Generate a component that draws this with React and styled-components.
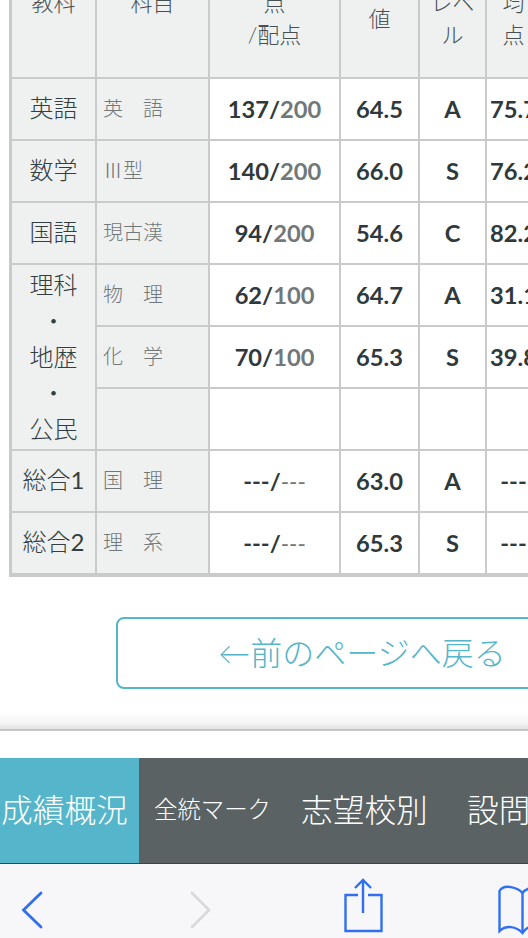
import React from 'react'
import styled, { createGlobalStyle } from 'styled-components'

const jp = `Lato, "Noto Sans CJK JP", sans-serif`
const line = '#c9cbcb'
const teal = '#55b5ca'
const ink = '#2f393c'
const blue = '#2f6ff0'

const GlobalStyle = createGlobalStyle`
  html, body { margin: 0; padding: 0; background: #fff; }
  body { font-family: ${jp}; }
`

const Screen = styled.div`
  width: 528px;
  height: 938px;
  overflow: hidden;
  display: flex;
  flex-direction: column;
`

const Page = styled.main`
  height: 713px;
  flex: none;
  overflow: hidden;
  display: flex;
  flex-direction: column;
`

const Table = styled.table`
  flex: none;
  width: 533px;
  margin: -71px 0 0 9px;
  table-layout: fixed;
  border-collapse: separate;
  border-spacing: 0;
  border-left: 3px solid ${line};
  border-bottom: 2px solid ${line};
  color: ${ink};
`

const Cell = styled.td`
  box-sizing: border-box;
  height: 62px;
  padding: 0;
  border-right: 2px solid ${line};
  border-bottom: 2px solid ${line};
  text-align: center;
  vertical-align: middle;
`

const Head = styled(Cell).attrs({ as: 'th' })`
  height: 150px;
  background: #eff1f1;
  font-size: 22px;
  font-weight: 300;
  line-height: 32px;
  color: #465053;
  word-break: break-all;
`

const Subject = styled(Cell)`
  background: #eff1f1;
  padding-bottom: ${p => (p.rowSpan ? 0 : 3)}px;
  font-size: 24px;
  font-weight: 300;
  line-height: 36px;
  color: #343e41;
`

const Digit = styled.span`
  font-weight: 400;
`

const Course = styled(Cell)`
  background: #eff1f1;
  padding: 0 0 4px 6px;
  text-align: left;
  font-size: 20px;
  font-weight: 300;
  color: #70787a;
`

const Value = styled(Cell)`
  padding-bottom: 1px;
  font-size: 23.7px;
  font-weight: 700;
  white-space: nowrap;
`

const Max = styled.span`
  color: #70787a;
  font-weight: ${p => (p.$light ? 400 : 700)};
  font-size: ${p => (p.$light ? '22.500px' : 'inherit')};
`

const BackButton = styled.a`
  flex: none;
  box-sizing: border-box;
  width: 492px;
  height: 72px;
  margin: 40px 0 0 116px;
  padding-bottom: 4px;
  display: flex;
  align-items: center;
  justify-content: center;
  border: 2px solid ${teal};
  border-radius: 8px;
  color: ${teal};
  font-size: 32px;
  font-weight: 300;
  white-space: nowrap;
`

const PageEdge = styled.div`
  flex: none;
  height: 18px;
  box-sizing: border-box;
  background: linear-gradient(#fff, #f4f4f4 60%, #e2e2e2);
  border-bottom: 2px solid #c4c4c4;
`

const TabBar = styled.nav`
  flex: none;
  height: 106px;
  margin-top: 27px;
  display: flex;
  background: #5a6264;
  border-bottom: 1px solid #3f4547;
  box-sizing: border-box;
  overflow: hidden;
`

const Tab = styled.a`
  flex: none;
  display: flex;
  align-items: center;
  padding: 0 0 5px ${p => p.$pad}px;
  width: ${p => p.$width}px;
  box-sizing: border-box;
  background: ${p => (p.$active ? teal : 'transparent')};
  color: #fff;
  font-size: ${p => (p.$small ? 23.4 : 31.7)}px;
  font-weight: 300;
  white-space: nowrap;
`

const Toolbar = styled.footer`
  flex: 1;
  background: #f7f7f9;
  position: relative;
  overflow: hidden;
`

const ToolIcon = styled.svg`
  position: absolute;
  left: 0;
  top: 0;
  width: 528px;
  height: 74px;
  fill: none;
  stroke-width: 2.4;
`

const rows = [
  { subject: '英語', course: '英　語', score: '137', max: '200', dev: '64.5', level: 'A', avg: '75.7' },
  { subject: '数学', course: 'Ⅲ型', score: '140', max: '200', dev: '66.0', level: 'S', avg: '76.2' },
  { subject: '国語', course: '現古漢', score: '94', max: '200', dev: '54.6', level: 'C', avg: '82.2' },
  { subject: ['理科', '・', '地歴', '・', '公民'], span: 3, course: '物　理', score: '62', max: '100', dev: '64.7', level: 'A', avg: '31.1' },
  { course: '化　学', score: '70', max: '100', dev: '65.3', level: 'S', avg: '39.8' },
  { course: '' },
  { subject: '総合', digit: '1', course: '国　理', score: '---', max: '---', light: true, dev: '63.0', level: 'A', avg: '---' },
  { subject: '総合', digit: '2', course: '理　系', score: '---', max: '---', light: true, dev: '65.3', level: 'S', avg: '---' },
]

function ScoreTable() {
  return (
    <Table>
      <colgroup>
        <col width="85" />
        <col width="113" />
        <col width="131" />
        <col width="79" />
        <col width="67" />
        <col width="55" />
      </colgroup>
      <thead>
        <tr>
          <Head>教科</Head>
          <Head>科目</Head>
          <Head>得<br />点<br />/配点</Head>
          <Head>偏差<br />値</Head>
          <Head>学力<br />レベ<br />ル</Head>
          <Head>平<br />均<br />点</Head>
        </tr>
      </thead>
      <tbody>
        {rows.map((r, i) => (
          <tr key={i}>
            {r.subject && (
              <Subject rowSpan={r.span}>
                {Array.isArray(r.subject)
                  ? r.subject.map((s, j) => <div key={j}>{s}</div>)
                  : <>{r.subject}{r.digit && <Digit>{r.digit}</Digit>}</>}
              </Subject>
            )}
            <Course>{r.course}</Course>
            <Value>{r.score && <>{r.score}/<Max $light={r.light}>{r.max}</Max></>}</Value>
            <Value>{r.dev}</Value>
            <Value>{r.level}</Value>
            <Value>{r.avg}</Value>
          </tr>
        ))}
      </tbody>
    </Table>
  )
}

function SafariIcons() {
  return (
    <ToolIcon viewBox="0 0 528 74">
      <path d="M41 29 L23.500 46 L41 63" stroke={blue} strokeWidth="2.800" strokeLinecap="round" />
      <path d="M192 29 L209 46 L192 63" stroke="#d8d9db" strokeWidth="2.800" strokeLinecap="round" />
      <path d="M358 31 H345.500 V67 H381.500 V31 H368" stroke={blue} />
      <path d="M363 49 V16 M355 24 L363 16 L371 24" stroke={blue} />
      <path d="M522.500 29 C518 24 504 19 499.500 27 V67 C506 61 516 62 522.500 69 C526 64 529 62 535 61" stroke={blue} />
      <path d="M522.500 29 C525 25 529 24 535 23 M522.500 29 V69" stroke={blue} />
    </ToolIcon>
  )
}

export default function App() {
  return (
    <Screen>
      <GlobalStyle />
      <Page>
        <ScoreTable />
        <BackButton>←前のページへ戻る</BackButton>
      </Page>
      <PageEdge />
      <TabBar>
        <Tab $active $pad={1} $width={139}>成績概況</Tab>
        <Tab $small $pad={15} $width={162}>全統マーク</Tab>
        <Tab $pad={0} $width={166}>志望校別</Tab>
        <Tab $pad={0} $width={124}>設問別</Tab>
      </TabBar>
      <Toolbar>
        <SafariIcons />
      </Toolbar>
    </Screen>
  )
}
